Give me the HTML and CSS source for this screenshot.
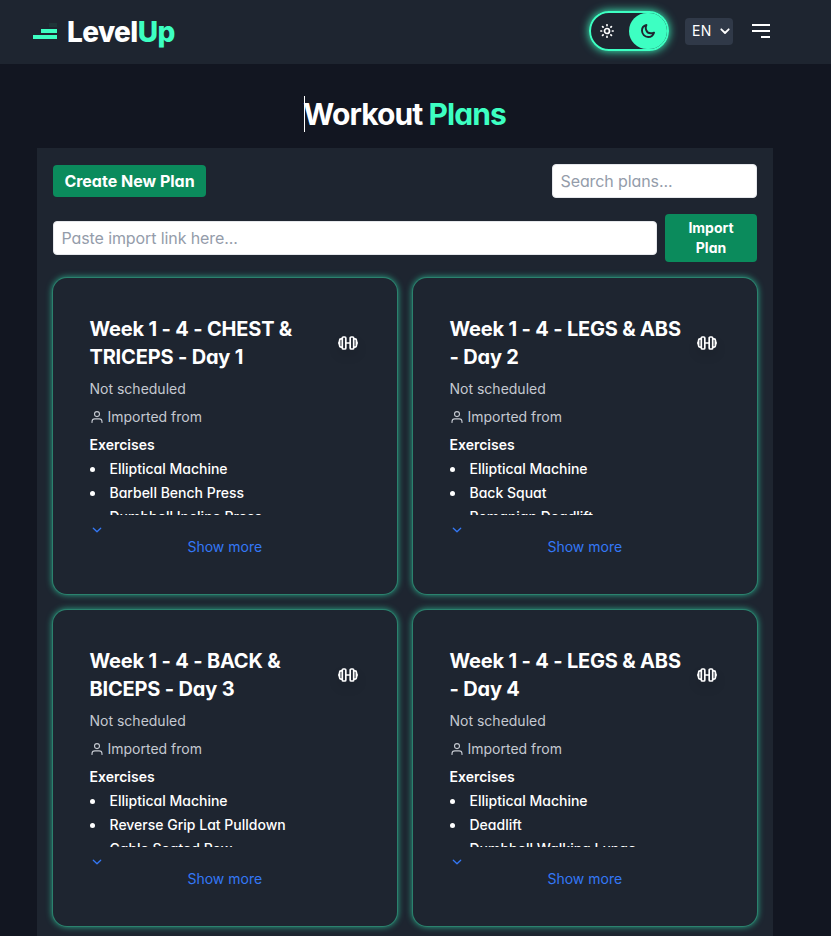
FILE: index.html
```
<!DOCTYPE html>
<html lang="en">
<head>
<meta charset="utf-8">
<title>LevelUp - Workout Plans</title>
<link rel="stylesheet" href="styles.css">
</head>
<body>
<svg width="0" height="0" class="defs" aria-hidden="true">
  <symbol id="dumbbell" viewBox="0 0 20 14"><g fill="none" stroke="currentColor" stroke-width="1.700" stroke-linejoin="round" stroke-linecap="round"><rect x="4.300" y="1" width="3.500" height="12" rx="1"/><rect x="12.200" y="1" width="3.500" height="12" rx="1"/><path d="M4 2.900H2.900Q1.600 2.900 1.600 4.200v5.600q0 1.300 1.300 1.300H4M16 2.900h1.100q1.300 0 1.300 1.300v5.600q0 1.300-1.300 1.300H16M1 6.200v1.600M19 6.200v1.600M8 7h4"/></g></symbol>
  <symbol id="user" viewBox="0 0 14 14"><g fill="none" stroke="currentColor" stroke-width="1.1" stroke-linecap="round"><circle cx="7" cy="4.1" r="2.5"/><path d="M2 12.400v-.7Q2 8.900 4.800 8.900h4.400Q12 8.900 12 11.700v.7"/></g></symbol>
  <symbol id="chevron" viewBox="0 0 10 6"><path d="M1.300 1.200 5 4.700 8.700 1.200" fill="none" stroke="currentColor" stroke-width="1.300" stroke-linecap="round" stroke-linejoin="round"/></symbol>
</svg>
<header class="header">
  <a class="brand">
    <svg class="brand-mark" width="24" height="16" viewBox="0 0 24 16"><path fill="#1f3438" d="M16 0h8v4h-8z"/><path fill="#3dffc2" d="M8 6h16v4H8zM0 12h24v4H0z"/></svg>
    <span>Level<span class="accent">Up</span></span>
  </a>
  <div class="tools">
    <div class="toggle">
      <svg class="sun" width="14" height="14" viewBox="0 0 14 14" fill="none" stroke="#fff" stroke-width="1.700" stroke-linecap="round"><circle cx="7" cy="7" r="2.500"/><path d="M7 .8v.8M7 12.400v.8M.8 7h.8M12.400 7h.8M2.600 2.600l.5.500M10.900 10.900l.5.500M2.600 11.400l.5-.5M10.900 3.100l.5-.5"/></svg>
      <span class="knob"><svg width="14" height="14" viewBox="0 0 14 14" fill="none" stroke="#1f2530" stroke-width="1.900" stroke-linejoin="round"><path d="M5.400 1C2.600 1.700.9 4 1 6.800 1.100 10.200 3.700 13 7.100 13c2.700 0 5.100-1.700 5.900-4.300-3.800 1.300-6.700.2-7.800-2.600C4.500 4.300 4.600 2.600 5.400 1Z"/></svg></span>
    </div>
    <div class="lang"><span>EN</span><svg width="10" height="7" viewBox="0 0 10 7"><path d="M1.300 1.300 5 5l3.700-3.700" fill="none" stroke="#fff" stroke-width="1.800" stroke-linecap="round" stroke-linejoin="round"/></svg></div>
    <svg class="menu" width="18" height="14" viewBox="0 0 18 14" fill="#fff"><path d="M0 0h18v2H0zM0 6h18v2H0zM9 12h9v2H9z"/></svg>
  </div>
</header>
<main>
  <h1><span class="caret"></span>Workout <span class="accent">Plans</span></h1>
  <section class="panel">
    <div class="row">
      <button class="btn">Create New Plan</button>
      <input class="field search" placeholder="Search plans...">
    </div>
    <div class="row import">
      <input class="field link" placeholder="Paste import link here...">
      <button class="btn small">Import Plan</button>
    </div>
    <div class="grid">
      <article class="card">
        <div class="top"><h2>Week 1 - 4 - CHEST &amp; TRICEPS - Day 1</h2><span class="badge"><svg width="20" height="14"><use href="#dumbbell"/></svg></span></div>
        <p class="meta">Not scheduled</p>
        <p class="meta"><svg width="14" height="14"><use href="#user"/></svg>Imported from</p>
        <h3>Exercises</h3>
        <ul><li>Elliptical Machine</li><li>Barbell Bench Press</li><li>Dumbbell Incline Press</li></ul>
        <div class="more"><svg width="10" height="6"><use href="#chevron"/></svg><span>Show more</span></div>
      </article>
      <article class="card">
        <div class="top"><h2>Week 1 - 4 - LEGS &amp; ABS - Day 2</h2><span class="badge"><svg width="20" height="14"><use href="#dumbbell"/></svg></span></div>
        <p class="meta">Not scheduled</p>
        <p class="meta"><svg width="14" height="14"><use href="#user"/></svg>Imported from</p>
        <h3>Exercises</h3>
        <ul><li>Elliptical Machine</li><li>Back Squat</li><li>Romanian Deadlift</li></ul>
        <div class="more"><svg width="10" height="6"><use href="#chevron"/></svg><span>Show more</span></div>
      </article>
      <article class="card">
        <div class="top"><h2>Week 1 - 4 - BACK &amp; BICEPS - Day 3</h2><span class="badge"><svg width="20" height="14"><use href="#dumbbell"/></svg></span></div>
        <p class="meta">Not scheduled</p>
        <p class="meta"><svg width="14" height="14"><use href="#user"/></svg>Imported from</p>
        <h3>Exercises</h3>
        <ul><li>Elliptical Machine</li><li>Reverse Grip Lat Pulldown</li><li>Cable Seated Row</li></ul>
        <div class="more"><svg width="10" height="6"><use href="#chevron"/></svg><span>Show more</span></div>
      </article>
      <article class="card">
        <div class="top"><h2>Week 1 - 4 - LEGS &amp; ABS - Day 4</h2><span class="badge"><svg width="20" height="14"><use href="#dumbbell"/></svg></span></div>
        <p class="meta">Not scheduled</p>
        <p class="meta"><svg width="14" height="14"><use href="#user"/></svg>Imported from</p>
        <h3>Exercises</h3>
        <ul><li>Elliptical Machine</li><li>Deadlift</li><li>Dumbbell Walking Lunge</li></ul>
        <div class="more"><svg width="10" height="6"><use href="#chevron"/></svg><span>Show more</span></div>
      </article>
    </div>
  </section>
</main>
</body>
</html>
```
FILE: styles.css
```
* { box-sizing: border-box; margin: 0; padding: 0; }
html, body { height: 936px; overflow: hidden; }
body { background: #121621; color: #fff; font-family: Inter, sans-serif; font-feature-settings: "cv11", "ss03"; font-size: 14px; line-height: 20px; }
.defs { position: absolute; }
svg { display: block; flex: none; }
.accent { color: #3dffc2; }
.header { height: 64px; background: #1e2530; display: flex; align-items: center; justify-content: space-between; padding: 0 61px 2px 33px; }
.brand { display: flex; align-items: center; gap: 10px; font-size: 28px; line-height: 36px; font-weight: 800; letter-spacing: -0.6px; }
.brand-mark { margin-top: 0; }
.brand > span { padding-top: 1px; }
.tools { display: flex; align-items: center; }
.toggle { width: 80px; height: 40px; border: 2px solid #3dffc2; border-radius: 20px; box-shadow: 0 0 10px #3dffc2; display: flex; align-items: center; justify-content: space-between; padding-left: 9px; margin-right: 16px; }
.knob { width: 38px; height: 36px; border-radius: 20px; background: #3dffc2; display: flex; align-items: center; justify-content: center; }
.lang { width: 48px; height: 27px; border-radius: 4px; background: #303948; display: flex; align-items: center; justify-content: space-between; padding: 0 3px 0 7px; font-size: 14px; margin-right: 19px; }
.lang span { letter-spacing: 0.3px; }
main { width: 736px; margin-left: 37px; }
h1 { height: 84px; padding-top: 32px; text-align: center; font-size: 30px; line-height: 36px; font-weight: 750; letter-spacing: -0.92px; }
.caret { display: inline-block; width: 1px; height: 36px; margin-right: -2px; background: #fff; vertical-align: top; }
.panel { background: #1e2530; padding: 16px; height: 800px; }
.row { display: flex; justify-content: space-between; align-items: center; gap: 8px; }
.import { margin: 16px 0; }
.btn { background: #0b8b5c; color: #fff; border: 0; border-radius: 4px; font: 700 16px/24px Inter, sans-serif; font-feature-settings: inherit; height: 32px; width: 153px; }
.btn.small { width: 92px; height: 48px; font-size: 14px; line-height: 20px; padding: 4px 16px; }
.field { height: 34px; border: 1px solid #e5e7eb; border-radius: 4px; background: #fff; padding: 0 7.500px; font: 16px/24px Inter, sans-serif; font-feature-settings: inherit; letter-spacing: -0.1px; }
.field::placeholder { color: #949caa; opacity: 1; }
.search { width: 205px; }
.link { flex: 1; }
.grid { display: grid; grid-template-columns: 344px 344px; gap: 16px; }
.card { height: 316px; padding: 37px 37px 0 36.500px; border-radius: 14px; box-shadow: 0 0 0 1px #2b826d, 0 0 6px 1px #2ba587; background: #1e2530; }
.top { display: flex; align-items: center; justify-content: space-between; height: 56px; margin-bottom: 8px; }
h2 { font-size: 20px; line-height: 28px; font-weight: 650; width: 240px; letter-spacing: -0.18px; }
.badge { width: 24px; height: 24px; border-radius: 12px; display: flex; align-items: center; justify-content: center; margin-right: 1px; }
.card:nth-child(odd) .badge { margin-right: 0; }
.badge svg { filter: drop-shadow(0 6px 5px #0002); }
.meta { height: 20px; margin-bottom: 8px; color: #c5c9d0; display: flex; align-items: center; gap: 4px; }
h3 { font-size: 14px; line-height: 20px; font-weight: 600; margin-bottom: 2px; }
ul { list-style: none; height: 58px; overflow: hidden; }
li { height: 24px; line-height: 24px; font-weight: 550; display: flex; align-items: center; }
li::before { content: ""; width: 5px; height: 5px; border-radius: 50%; background: #fff; margin-right: 15px; }
li:last-child::before { visibility: hidden; }
.more { color: #3478f6; padding-top: 12px; }
.more svg { margin-left: 2px; }
.more span { display: block; text-align: center; margin-top: 4px; }
```
